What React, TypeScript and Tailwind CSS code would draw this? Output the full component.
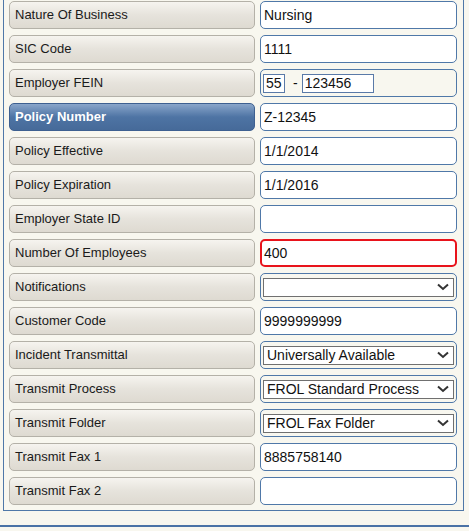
import React from "react";

type Field =
  | { label: string; kind: "text"; value: string; error?: boolean }
  | { label: string; kind: "select"; value: string }
  | { label: string; kind: "fein"; prefix: string; value: string };

const fields: Field[] = [
  { label: "Nature Of Business", kind: "text", value: "Nursing" },
  { label: "SIC Code", kind: "text", value: "1111" },
  { label: "Employer FEIN", kind: "fein", prefix: "55", value: "123456" },
  { label: "Policy Number", kind: "text", value: "Z-12345" },
  { label: "Policy Effective", kind: "text", value: "1/1/2014" },
  { label: "Policy Expiration", kind: "text", value: "1/1/2016" },
  { label: "Employer State ID", kind: "text", value: "" },
  { label: "Number Of Employees", kind: "text", value: "400", error: true },
  { label: "Notifications", kind: "select", value: "" },
  { label: "Customer Code", kind: "text", value: "9999999999" },
  { label: "Incident Transmittal", kind: "select", value: "Universally Available" },
  { label: "Transmit Process", kind: "select", value: "FROL Standard Process" },
  { label: "Transmit Folder", kind: "select", value: "FROL Fax Folder" },
  { label: "Transmit Fax 1", kind: "text", value: "8885758140" },
  { label: "Transmit Fax 2", kind: "text", value: "" },
];

const ACTIVE = "Policy Number";

const Chevron = () => (
  <svg width="12" height="8" viewBox="0 0 12 8" className="shrink-0">
    <path d="M1 1.5 L6 6 L11 1.5" fill="none" stroke="#333" strokeWidth="2" />
  </svg>
);

const Label = ({ text }: { text: string }) => {
  const active = text === ACTIVE;
  return (
    <div
      className={
        active
          ? "w-[246px] h-[28px] shrink-0 flex items-center pl-[5px] rounded-[5px] border border-[#3e6090] bg-gradient-to-b from-[#8aa6ca] via-[#4e74a4] to-[#466a99] text-white font-bold text-[13px]"
          : "w-[246px] h-[28px] shrink-0 flex items-center pl-[5px] rounded-[5px] border border-[#b4b1a8] bg-gradient-to-b from-[#f6f4ef] via-[#e6e3dc] to-[#dedad1] text-[#1a1a1a] text-[13px]"
      }
    >
      {text}
    </div>
  );
};

const Control = ({ field }: { field: Field }) => {
  if (field.kind === "fein") {
    return (
      <div className="w-[197px] h-[28px] flex items-center pl-[2px] rounded-[5px] border border-[#4f78a8] bg-[#f8f7ef] text-[14px] text-[#111]">
        <div className="w-[22px] h-[19px] border border-[#5a7aa8] bg-white flex items-center pl-[2px]">
          {field.prefix}
        </div>
        <span className="ml-[8px] mr-[4px]">-</span>
        <div className="w-[72px] h-[19px] border border-[#5a7aa8] bg-white flex items-center pl-[2px]">
          {field.value}
        </div>
      </div>
    );
  }
  if (field.kind === "select") {
    return (
      <div className="w-[197px] h-[28px] flex items-center px-[2px] rounded-[5px] border border-[#4f78a8] bg-[#f8f7ef]">
        <div className="w-[191px] h-[19px] flex items-center justify-between pl-[3px] pr-[4px] border border-[#707070] bg-white text-[14px] text-[#111]">
          <span>{field.value}</span>
          <Chevron />
        </div>
      </div>
    );
  }
  return (
    <div
      className={
        field.error
          ? "w-[197px] h-[28px] flex items-center pl-[2px] rounded-[5px] border-2 border-[#e8131b] bg-white text-[14px] text-[#111]"
          : "w-[197px] h-[28px] flex items-center pl-[3px] rounded-[5px] border border-[#4f78a8] bg-white text-[14px] text-[#111]"
      }
    >
      {field.value}
    </div>
  );
};

export default function App() {
  return (
    <div className="w-[469px] h-[531px] bg-[#f8f7ef] font-['Liberation_Sans',Arial,sans-serif] overflow-hidden">
      <div className="ml-[3px] w-[461px] border-x border-b border-[#4f78a8] pl-[5px] pt-[1px] pb-[5px] flex flex-col gap-[6px]">
        {fields.map((f) => (
          <div key={f.label} className="flex gap-[5px]">
            <Label text={f.label} />
            <Control field={f} />
          </div>
        ))}
      </div>
      <div className="mt-[14px] h-[2px] bg-[#4a72a6]" />
    </div>
  );
}
